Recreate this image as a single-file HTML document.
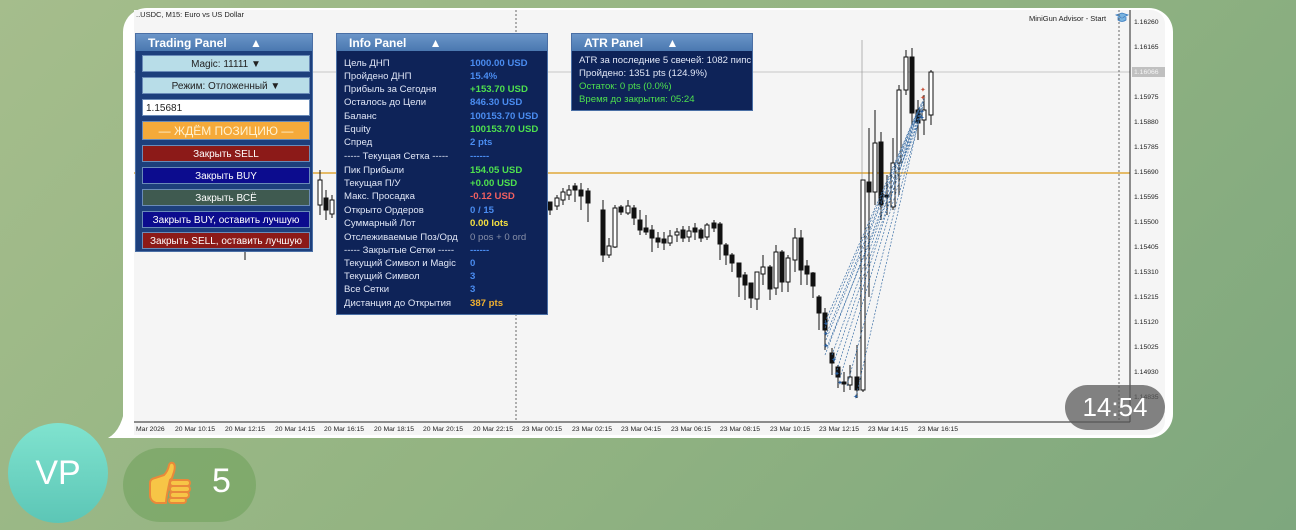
<!DOCTYPE html>
<html><head><meta charset="utf-8"><style>
*{margin:0;padding:0;box-sizing:border-box}
body{width:1296px;height:530px;overflow:hidden;background:linear-gradient(135deg,#a5bd8c 0%,#93b482 50%,#7ea77e 100%);font-family:"Liberation Sans","DejaVu Sans",sans-serif;position:relative}
.bubble{position:absolute;left:123px;top:8px;width:1050px;height:430px;background:#fff;border-radius:24px 24px 24px 0}
.tail{position:absolute;left:108px;top:400px;width:30px;height:38px;background:#fff;clip-path:path('M30 0 L30 38 L0 38 Q15 30 18 0 Z')}
.chart{position:absolute;left:134px;top:10px;width:1031px;height:425px;background:#f5f5f5;overflow:hidden;border-radius:0 14px 14px 0}
.p{position:absolute;font-size:10px;color:#fff}
.hdr{position:absolute;left:0;top:0;right:0;height:17px;background:linear-gradient(#6b95c8,#4a78b0);color:#fff;font-weight:bold;font-size:12px;padding:2px 0 0 12px}
.btn{position:absolute;left:6px;width:168px;height:17px;font-size:10px;text-align:center;line-height:17px;border:1px solid #6a8bb8}
.row{position:absolute;left:7px;font-size:9.6px;color:#e0e6f6;white-space:nowrap}
.v{position:absolute;left:126px;font-weight:bold}
</style></head><body>
<div class="tail"></div>
<div class="bubble"></div>
<div class="chart">
<svg width="1031" height="425" style="position:absolute;left:0;top:0" font-family="Liberation Sans" font-size="7">
<text x="2" y="7" font-size="7.5" fill="#222">..USDC, M15:  Euro vs US Dollar</text>
<text x="895" y="11" font-size="7.5" fill="#222">MiniGun Advisor - Start</text>
<path d="M982 5 l6 -2 l6 2 l-6 3z M984 7 v3 q4 3 8 0 v-3" fill="#7ab4e0" stroke="#3a7cc0" stroke-width="0.8"/>
<line x1="0" y1="62" x2="996" y2="62" stroke="#c8c8c8"/>
<line x1="0" y1="163" x2="996" y2="163" stroke="#e0a83a" stroke-width="1.6"/>
<line x1="382" y1="0" x2="382" y2="412" stroke="#666" stroke-dasharray="2,2"/>
<line x1="985" y1="0" x2="985" y2="412" stroke="#666" stroke-dasharray="2,2"/>
<line x1="728" y1="30" x2="728" y2="380" stroke="#888" stroke-width="0.6"/>
<line x1="996" y1="0" x2="996" y2="412" stroke="#222"/>
<line x1="0" y1="412" x2="996" y2="412" stroke="#222"/>
<g fill="#222" font-size="6.8">
<text x="1000" y="14">1.16260</text><text x="1000" y="39">1.16165</text>
<rect x="998" y="57" width="33" height="10" fill="#c0c0c0"/><text x="1000" y="64" fill="#f4f4f4">1.16066</text>
<text x="1000" y="89">1.15975</text><text x="1000" y="114">1.15880</text><text x="1000" y="139">1.15785</text>
<text x="1000" y="164">1.15690</text><text x="1000" y="189">1.15595</text><text x="1000" y="214">1.15500</text>
<text x="1000" y="239">1.15405</text><text x="1000" y="264">1.15310</text><text x="1000" y="289">1.15215</text>
<text x="1000" y="314">1.15120</text><text x="1000" y="339">1.15025</text><text x="1000" y="364">1.14930</text><text x="1000" y="389">1.14835</text>
<text x="2" y="421">Mar 2026</text><text x="41" y="421">20 Mar 10:15</text><text x="91" y="421">20 Mar 12:15</text><text x="141" y="421">20 Mar 14:15</text><text x="190" y="421">20 Mar 16:15</text><text x="240" y="421">20 Mar 18:15</text><text x="289" y="421">20 Mar 20:15</text><text x="339" y="421">20 Mar 22:15</text><text x="388" y="421">23 Mar 00:15</text><text x="438" y="421">23 Mar 02:15</text><text x="487" y="421">23 Mar 04:15</text><text x="537" y="421">23 Mar 06:15</text><text x="586" y="421">23 Mar 08:15</text><text x="636" y="421">23 Mar 10:15</text><text x="685" y="421">23 Mar 12:15</text><text x="734" y="421">23 Mar 14:15</text><text x="784" y="421">23 Mar 16:15</text>
</g>
<g stroke="#111" stroke-width="1">
<line x1="111" y1="160" x2="111" y2="250"/><rect x="109" y="175" width="4" height="20" fill="#111"/>
<line x1="186" y1="160" x2="186" y2="205"/><rect x="184" y="170" width="4" height="25" fill="#fff"/>
<line x1="192" y1="180" x2="192" y2="210"/><rect x="190" y="188" width="4" height="12" fill="#111"/>
<line x1="198" y1="185" x2="198" y2="208"/><rect x="196" y="190" width="4" height="14" fill="#fff"/>
<line x1="416" y1="195" x2="416" y2="205"/><rect x="414" y="192" width="4" height="8" fill="#111"/>
<line x1="423" y1="185" x2="423" y2="200"/><rect x="421" y="188" width="4" height="8" fill="#fff"/>
<line x1="429" y1="178" x2="429" y2="195"/><rect x="427" y="182" width="4" height="8" fill="#fff"/>
<line x1="435" y1="175" x2="435" y2="190"/><rect x="433" y="180" width="4" height="5" fill="#fff"/>
<line x1="441" y1="173" x2="441" y2="192"/><rect x="439" y="176" width="4" height="4" fill="#111"/>
<line x1="447" y1="173" x2="447" y2="200"/><rect x="445" y="180" width="4" height="6" fill="#111"/>
<line x1="454" y1="178" x2="454" y2="212"/><rect x="452" y="181" width="4" height="12" fill="#111"/>
<line x1="469" y1="190" x2="469" y2="252"/><rect x="467" y="200" width="4" height="45" fill="#111"/>
<line x1="475" y1="228" x2="475" y2="248"/><rect x="473" y="236" width="4" height="9" fill="#fff"/>
<line x1="481" y1="195" x2="481" y2="238"/><rect x="479" y="198" width="4" height="39" fill="#fff"/>
<line x1="487" y1="195" x2="487" y2="205"/><rect x="485" y="197" width="4" height="5" fill="#111"/>
<line x1="494" y1="190" x2="494" y2="205"/><rect x="492" y="196" width="4" height="7" fill="#fff"/>
<line x1="500" y1="195" x2="500" y2="215"/><rect x="498" y="198" width="4" height="10" fill="#111"/>
<line x1="506" y1="200" x2="506" y2="225"/><rect x="504" y="210" width="4" height="10" fill="#111"/>
<line x1="512" y1="205" x2="512" y2="225"/><rect x="510" y="218" width="4" height="4" fill="#111"/>
<line x1="518" y1="215" x2="518" y2="242"/><rect x="516" y="220" width="4" height="8" fill="#111"/>
<line x1="524" y1="222" x2="524" y2="238"/><rect x="522" y="228" width="4" height="4" fill="#111"/>
<line x1="530" y1="222" x2="530" y2="240"/><rect x="528" y="229" width="4" height="4" fill="#111"/>
<line x1="536" y1="220" x2="536" y2="236"/><rect x="534" y="226" width="4" height="7" fill="#fff"/>
<line x1="543" y1="218" x2="543" y2="232"/><rect x="541" y="222" width="4" height="3" fill="#fff"/>
<line x1="549" y1="216" x2="549" y2="232"/><rect x="547" y="220" width="4" height="8" fill="#111"/>
<line x1="555" y1="216" x2="555" y2="232"/><rect x="553" y="221" width="4" height="6" fill="#fff"/>
<line x1="561" y1="213" x2="561" y2="230"/><rect x="559" y="218" width="4" height="4" fill="#111"/>
<line x1="567" y1="218" x2="567" y2="232"/><rect x="565" y="220" width="4" height="8" fill="#111"/>
<line x1="573" y1="213" x2="573" y2="230"/><rect x="571" y="215" width="4" height="12" fill="#fff"/>
<line x1="580" y1="210" x2="580" y2="222"/><rect x="578" y="213" width="4" height="5" fill="#111"/>
<line x1="586" y1="212" x2="586" y2="250"/><rect x="584" y="214" width="4" height="20" fill="#111"/>
<line x1="592" y1="233" x2="592" y2="255"/><rect x="590" y="235" width="4" height="10" fill="#111"/>
<line x1="598" y1="243" x2="598" y2="262"/><rect x="596" y="245" width="4" height="8" fill="#111"/>
<line x1="605" y1="253" x2="605" y2="287"/><rect x="603" y="253" width="4" height="14" fill="#111"/>
<line x1="611" y1="262" x2="611" y2="290"/><rect x="609" y="265" width="4" height="10" fill="#111"/>
<line x1="617" y1="273" x2="617" y2="298"/><rect x="615" y="273" width="4" height="15" fill="#111"/>
<line x1="623" y1="262" x2="623" y2="300"/><rect x="621" y="262" width="4" height="27" fill="#fff"/>
<line x1="629" y1="245" x2="629" y2="275"/><rect x="627" y="257" width="4" height="7" fill="#fff"/>
<line x1="636" y1="255" x2="636" y2="290"/><rect x="634" y="257" width="4" height="22" fill="#111"/>
<line x1="642" y1="235" x2="642" y2="285"/><rect x="640" y="242" width="4" height="36" fill="#fff"/>
<line x1="648" y1="240" x2="648" y2="282"/><rect x="646" y="242" width="4" height="30" fill="#111"/>
<line x1="654" y1="245" x2="654" y2="282"/><rect x="652" y="248" width="4" height="24" fill="#fff"/>
<line x1="661" y1="218" x2="661" y2="262"/><rect x="659" y="228" width="4" height="22" fill="#fff"/>
<line x1="667" y1="220" x2="667" y2="275"/><rect x="665" y="228" width="4" height="32" fill="#111"/>
<line x1="673" y1="250" x2="673" y2="275"/><rect x="671" y="256" width="4" height="8" fill="#111"/>
<line x1="679" y1="262" x2="679" y2="288"/><rect x="677" y="263" width="4" height="13" fill="#111"/>
<line x1="685" y1="285" x2="685" y2="320"/><rect x="683" y="287" width="4" height="16" fill="#111"/>
<line x1="691" y1="298" x2="691" y2="340"/><rect x="689" y="303" width="4" height="17" fill="#111"/>
<line x1="698" y1="338" x2="698" y2="365"/><rect x="696" y="343" width="4" height="10" fill="#111"/>
<line x1="704" y1="355" x2="704" y2="378"/><rect x="702" y="357" width="4" height="10" fill="#111"/>
<line x1="710" y1="362" x2="710" y2="382"/><rect x="708" y="372" width="4" height="2" fill="#111"/>
<line x1="716" y1="355" x2="716" y2="380"/><rect x="714" y="367" width="4" height="8" fill="#fff"/>
<line x1="723" y1="335" x2="723" y2="388"/><rect x="721" y="367" width="4" height="13" fill="#111"/>
<line x1="729" y1="170" x2="729" y2="382"/><rect x="727" y="170" width="4" height="210" fill="#fff"/>
<line x1="735" y1="118" x2="735" y2="287"/><rect x="733" y="172" width="4" height="10" fill="#111"/>
<line x1="741" y1="100" x2="741" y2="195"/><rect x="739" y="133" width="4" height="49" fill="#fff"/>
<line x1="747" y1="122" x2="747" y2="210"/><rect x="745" y="132" width="4" height="63" fill="#111"/>
<line x1="753" y1="165" x2="753" y2="205"/><rect x="751" y="185" width="4" height="2" fill="#111"/>
<line x1="759" y1="128" x2="759" y2="200"/><rect x="757" y="153" width="4" height="44" fill="#fff"/>
<line x1="765" y1="75" x2="765" y2="185"/><rect x="763" y="80" width="4" height="73" fill="#fff"/>
<line x1="772" y1="40" x2="772" y2="85"/><rect x="770" y="47" width="4" height="33" fill="#fff"/>
<line x1="778" y1="38" x2="778" y2="115"/><rect x="776" y="47" width="4" height="56" fill="#111"/>
<line x1="784" y1="90" x2="784" y2="130"/><rect x="782" y="100" width="4" height="13" fill="#111"/>
<line x1="790" y1="85" x2="790" y2="125"/><rect x="788" y="100" width="4" height="10" fill="#fff"/>
<line x1="797" y1="60" x2="797" y2="115"/><rect x="795" y="62" width="4" height="43" fill="#fff"/>
</g>
<g stroke="#3a6ea5" stroke-width="0.7" stroke-dasharray="2,1.5" fill="none">
<path d="M691 312 L784 100 M691 318 L786 96 M692 325 L788 92 M692 330 L790 88 M693 337 L788 104 M698 345 L786 98 M700 352 L790 90 M703 360 L784 102 M706 368 L788 96 M713 376 L790 92 M722 387 L786 105 M691 345 L782 110"/>
</g>
<g fill="#2a5f9e" font-size="7"><text x="689" y="316">✦</text><text x="689" y="326">✦</text><text x="689" y="338">✦</text><text x="697" y="352">✦</text><text x="700" y="366">✦</text><text x="703" y="375">✦</text><text x="719" y="389">✦</text><text x="785" y="104">✦</text><text x="785" y="110">✦</text></g>
<g fill="#c8523a" font-size="7"><text x="786" y="82">✦</text><text x="786" y="90">✦</text></g>
</svg>

<div class="p" style="left:1px;top:23px;width:178px;height:219px;background:#1d3f7c;border:1px solid #4a6fa5">
<div class="hdr">Trading Panel &nbsp;&nbsp;&nbsp;&nbsp;&nbsp;&nbsp;▲</div>
<div class="btn" style="top:21px;background:#b8dde8;color:#222">Magic: 11111 ▼</div>
<div class="btn" style="top:43px;background:#b8dde8;color:#222">Режим: Отложенный ▼</div>
<div class="btn" style="top:65px;background:#fff;color:#222;text-align:left;padding-left:3px">1.15681</div>
<div class="btn" style="top:87px;height:19px;line-height:19px;background:#f5aa3a;color:#fff2d0;font-size:12px">— ЖДЁМ ПОЗИЦИЮ —</div>
<div class="btn" style="top:111px;background:#8c1a18;color:#fff">Закрыть SELL</div>
<div class="btn" style="top:133px;background:#0c0c8e;color:#fff">Закрыть BUY</div>
<div class="btn" style="top:155px;background:#3f5a50;color:#fff">Закрыть ВСЁ</div>
<div class="btn" style="top:177px;background:#0c0c8e;color:#fff">Закрыть BUY, оставить лучшую</div>
<div class="btn" style="top:198px;background:#8c1a18;color:#fff">Закрыть SELL, оставить лучшую</div>
</div>

<div class="p" style="left:202px;top:23px;width:212px;height:282px;background:#0e2358;border:1px solid #4a6fa5">
<div class="hdr">Info Panel &nbsp;&nbsp;&nbsp;&nbsp;&nbsp;&nbsp;▲</div>
<div class="row" style="top:24px">Цель ДНП<span class="v" style="color:#4a8cf0">1000.00 USD</span></div>
<div class="row" style="top:37px">Пройдено ДНП<span class="v" style="color:#4a8cf0">15.4%</span></div>
<div class="row" style="top:50px">Прибыль за Сегодня<span class="v" style="color:#4ee04e">+153.70 USD</span></div>
<div class="row" style="top:63px">Осталось до Цели<span class="v" style="color:#4a8cf0">846.30 USD</span></div>
<div class="row" style="top:77px">Баланс<span class="v" style="color:#4a8cf0">100153.70 USD</span></div>
<div class="row" style="top:90px">Equity<span class="v" style="color:#4ee04e">100153.70 USD</span></div>
<div class="row" style="top:103px">Спред<span class="v" style="color:#4a8cf0">2 pts</span></div>
<div class="row" style="top:117px">----- Текущая Сетка -----<span class="v" style="color:#4a8cf0">------</span></div>
<div class="row" style="top:131px">Пик Прибыли<span class="v" style="color:#4ee04e">154.05 USD</span></div>
<div class="row" style="top:144px">Текущая П/У<span class="v" style="color:#4ee04e">+0.00 USD</span></div>
<div class="row" style="top:157px">Макс. Просадка<span class="v" style="color:#f06060">-0.12 USD</span></div>
<div class="row" style="top:171px">Открыто Ордеров<span class="v" style="color:#4a8cf0">0 / 15</span></div>
<div class="row" style="top:184px">Суммарный Лот<span class="v" style="color:#f5e040">0.00 lots</span></div>
<div class="row" style="top:198px">Отслеживаемые Поз/Орд<span class="v" style="color:#8890a8;font-weight:normal">0 pos + 0 ord</span></div>
<div class="row" style="top:211px">----- Закрытые Сетки -----<span class="v" style="color:#4a8cf0">------</span></div>
<div class="row" style="top:224px">Текущий Символ и Magic<span class="v" style="color:#4a8cf0">0</span></div>
<div class="row" style="top:237px">Текущий Символ<span class="v" style="color:#4a8cf0">3</span></div>
<div class="row" style="top:250px">Все Сетки<span class="v" style="color:#4a8cf0">3</span></div>
<div class="row" style="top:264px">Дистанция до Открытия<span class="v" style="color:#f0b030">387 pts</span></div>
</div>

<div class="p" style="left:437px;top:23px;width:182px;height:78px;background:#0e2358;border:1px solid #4a6fa5;overflow:hidden">
<div class="hdr">ATR Panel &nbsp;&nbsp;&nbsp;&nbsp;&nbsp;&nbsp;▲</div>
<div class="row" style="top:21px">ATR за последние 5 свечей: 1082 пипс</div>
<div class="row" style="top:34px">Пройдено:  1351 pts (124.9%)</div>
<div class="row" style="top:47px;color:#4ee04e">Остаток: 0 pts (0.0%)</div>
<div class="row" style="top:60px;color:#4ee04e">Время до закрытия: 05:24</div>
</div>
</div>

<div style="position:absolute;left:1065px;top:385px;width:100px;height:45px;border-radius:23px;background:rgba(90,90,90,0.75);color:#fff;font-size:26px;text-align:center;line-height:45px">14:54</div>

<div style="position:absolute;left:8px;top:423px;width:100px;height:100px;border-radius:50%;background:linear-gradient(#80e3cf,#5cc6b6);color:#fff;font-size:34px;text-align:center;line-height:100px">VP</div>

<div style="position:absolute;left:123px;top:448px;width:133px;height:74px;border-radius:37px;background:rgba(110,160,90,0.55)"></div>
<svg style="position:absolute;left:140px;top:455px" width="60" height="60" viewBox="0 0 60 60">
<path d="M10 28 q0 -4 5 -5 l9 -3 q4 -4 5 -10 q1 -3 4 -2 q3 2 1 9 l-2 6 l-2 2 v0 q-4 18 -4 23 h-10 q-6 -2 -6 -8z" fill="#f7c546" stroke="#e9893a" stroke-width="2" stroke-linejoin="round"/>
<rect x="30" y="25" width="20" height="6" rx="3" fill="#f7c546" stroke="#e9893a" stroke-width="2"/>
<rect x="30" y="31" width="20" height="6" rx="3" fill="#f7c546" stroke="#e9893a" stroke-width="2"/>
<rect x="30" y="37" width="19" height="6" rx="3" fill="#f7c546" stroke="#e9893a" stroke-width="2"/>
<rect x="29" y="43" width="17" height="5" rx="2.5" fill="#f7c546" stroke="#e9893a" stroke-width="2"/>
</svg>
<div style="position:absolute;left:212px;top:462px;color:#fff;font-size:34px">5</div>
</body></html>
